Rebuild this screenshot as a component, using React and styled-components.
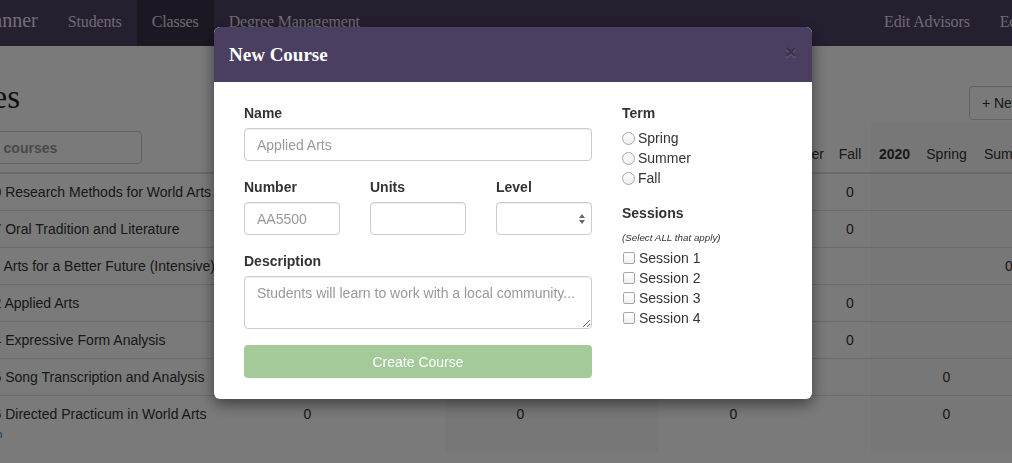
import React from 'react'
import styled, { createGlobalStyle } from 'styled-components'

const GlobalStyle = createGlobalStyle`
  * { box-sizing: border-box; }
  html, body {
    margin: 0;
    padding: 0;
    overflow: hidden;
    background: #fff;
  }
  body {
    font-family: "Liberation Sans", Arial, sans-serif;
    font-size: 14px;
    line-height: 20px;
    color: #333;
  }
`

const Page = styled.div`
  width: 1012px;
  height: 463px;
  overflow: hidden;
`

/* ---------- navbar ---------- */

const NavBar = styled.nav`
  display: flex;
  width: 1212px;
  height: 46px;
  margin-left: -100px;
  background: #4f4165;
  font-family: "Liberation Serif", Georgia, serif;
`

const Brand = styled.div`
  padding: 10px 15px 16px;
  font-size: 20px;
  line-height: 20px;
  color: #ece8f0;
`

const NavItem = styled.div`
  padding: 12px 15px 14px;
  font-size: 16px;
  line-height: 20px;
  letter-spacing: -0.15px;
  color: #e4dfea;
  white-space: nowrap;
  background: ${props => props.$active ? '#3c3249' : 'transparent'};
`

const NavRight = styled.div`
  display: flex;
  margin-left: auto;
  padding-right: 16px;
`

/* ---------- page body ---------- */

const Main = styled.main`
  width: 1163px;
  margin-left: -79px;
`

const TitleRow = styled.div`
  display: flex;
  justify-content: space-between;
  align-items: baseline;
  margin-top: 35px;
`

const Title = styled.h2`
  margin: 0;
  font-family: "Liberation Serif", Georgia, serif;
  font-size: 33px;
  line-height: 33px;
  font-weight: normal;
  color: #222;
`

const NewButton = styled.button`
  padding: 6px 12px;
  border: 1px solid #ccc;
  border-radius: 4px;
  background: #fff;
  font-family: inherit;
  font-size: 14px;
  line-height: 20px;
  color: #333;
`

const TableWrap = styled.div`
  margin-top: 3px;
  padding-left: 16px;
`

const Table = styled.table`
  width: 1147px;
  table-layout: fixed;
  border-collapse: collapse;
`

const HeadCell = styled.th`
  padding: 8px;
  vertical-align: bottom;
  border-bottom: 2px solid #ddd;
  text-align: ${props => props.$left ? 'left' : 'center'};
  font-weight: ${props => props.$bold ? 'bold' : 'normal'};
  white-space: nowrap;
  overflow: hidden;
  background: ${props => props.$shade ? '#f9f9f9' : 'transparent'};
`

const Cell = styled.td`
  padding: 8px;
  vertical-align: top;
  border-top: 1px solid #ddd;
  text-align: ${props => props.$left ? 'left' : 'center'};
  white-space: nowrap;
  overflow: hidden;
  background: ${props => props.$shade ? '#f9f9f9' : 'transparent'};
`

const SearchInput = styled.input`
  display: block;
  width: 202px;
  height: 33px;
  margin-left: -5px;
  padding: 6px 12px;
  border: 1px solid #ccc;
  border-radius: 4px;
  font-family: inherit;
  font-size: 14px;
  &::placeholder { color: #999; font-weight: bold; }
`

const CourseLink = styled.div`
  font-size: 11px;
  color: #337ab7;
`

/* ---------- modal ---------- */

const Backdrop = styled.div`
  position: fixed;
  inset: 0;
  background: rgba(0, 0, 0, 0.52);
`

const Dialog = styled.div`
  position: fixed;
  top: 27px;
  left: 214px;
  width: 598px;
  border-radius: 6px;
  overflow: hidden;
  background: #fff;
  box-shadow: 0 5px 15px rgba(0, 0, 0, 0.5);
`

const ModalHeader = styled.div`
  display: flex;
  align-items: center;
  justify-content: space-between;
  height: 55px;
  padding: 0 15px;
  background: #4a3f60;
`

const ModalTitle = styled.h4`
  margin: 0;
  font-family: "Liberation Serif", Georgia, serif;
  font-size: 19px;
  line-height: 25px;
  font-weight: bold;
  color: #fff;
`

const Close = styled.span`
  margin-top: -6px;
  font-size: 21px;
  line-height: 1;
  font-weight: bold;
  color: #000;
  opacity: 0.2;
  text-shadow: 0 1px 0 #fff;
`

const ModalBody = styled.div`
  display: grid;
  grid-template-columns: 348px 1fr;
  column-gap: 30px;
  padding: 21px 30px;
`

const Field = styled.div`
  margin-bottom: 16px;
`

const Label = styled.label`
  display: block;
  margin-bottom: 5px;
  font-weight: bold;
  color: #333;
`

const inputBase = `
  display: block;
  width: 100%;
  padding: 6px 12px;
  border: 1px solid #ccc;
  border-radius: 4px;
  background: #fff;
  font-family: "Liberation Sans", Arial, sans-serif;
  font-size: 14px;
  color: #555;
  box-shadow: inset 0 1px 1px rgba(0, 0, 0, 0.075);
  &::placeholder { color: #999; }
`

const TextInput = styled.input`
  ${inputBase}
  height: 33px;
`

const TextArea = styled.textarea`
  ${inputBase}
  height: 53px;
  line-height: 20px;
`

const ThreeCols = styled.div`
  display: grid;
  grid-template-columns: repeat(3, 96px);
  column-gap: 30px;
  margin-bottom: 16px;
`

const SelectWrap = styled.div`
  position: relative;
`

const Select = styled.select`
  ${inputBase}
  height: 33px;
  appearance: none;
`

const SelectArrows = styled.svg`
  position: absolute;
  right: 7px;
  top: 12px;
  pointer-events: none;
`

const SubmitButton = styled.button`
  display: block;
  width: 100%;
  height: 33px;
  border: none;
  border-radius: 4px;
  background: #a3ca98;
  font-family: inherit;
  font-size: 14px;
  color: #fff;
`

const Group = styled.div`
  margin-bottom: ${props => props.$gap || 0}px;
`

const Option = styled.label`
  display: flex;
  align-items: center;
  height: 20px;
  color: #333;
`

const Radio = styled.input`
  appearance: none;
  width: 13px;
  height: 13px;
  margin: 0 3px 0 0;
  border: 1px solid #a6a6a6;
  border-radius: 50%;
  background: linear-gradient(#fff, #ededed);
`

const Check = styled.input`
  appearance: none;
  width: 12px;
  height: 12px;
  margin: 0 4px 0 1px;
  border: 1px solid #a6a6a6;
  border-radius: 2px;
  background: linear-gradient(#fff, #f0f0f0);
`

const Hint = styled.div`
  font-size: 9.8px;
  font-style: italic;
  color: #333;
`

/* ---------- data ---------- */

const years = [2017, 2018, 2019, 2020]
const seasons = ['Spring', 'Summer', 'Fall']
const widths = [46, 59, 66, 42]

const courses = [
  { code: 'WA 5300', name: 'Research Methods for World Arts', offered: ['2017-Fall', '2018-Fall', '2019-Fall'] },
  { code: 'WA 5307', name: 'Oral Tradition and Literature', offered: ['2018-Fall', '2019-Fall'] },
  { code: 'WA 5311', name: 'Arts for a Better Future (Intensive)', offered: ['2018-Summer', '2020-Summer'] },
  { code: 'WA 5312', name: 'Applied Arts', offered: ['2017-Fall', '2019-Fall'] },
  { code: 'WA 5314', name: 'Expressive Form Analysis', offered: ['2018-Fall', '2019-Fall'] },
  { code: 'WA 5315', name: 'Song Transcription and Analysis', offered: ['2018-Spring', '2020-Spring'] },
  { code: 'WA 5316', name: 'Directed Practicum in World Arts', offered: ['2017-Spring', '2018-Spring', '2019-Spring', '2020-Spring'], link: 'Add section' },
]

const shaded = i => i % 2 === 1

const ArrowsIcon = () => (
  <SelectArrows width="6" height="10" viewBox="0 0 6 10">
    <path d="M3 0 L6 4 L0 4 Z" fill="#666" />
    <path d="M0 6 L6 6 L3 10 Z" fill="#666" />
  </SelectArrows>
)

const CoursesTable = () => (
  <Table>
    <colgroup>
      <col style={{ width: 295 }} />
      {years.map(y => widths.map((w, i) => <col key={`${y}-${i}`} style={{ width: w }} />))}
    </colgroup>
    <thead>
      <tr>
        <HeadCell $left>
          <SearchInput placeholder="Search courses" />
        </HeadCell>
        {years.map((y, yi) => (
          <React.Fragment key={y}>
            <HeadCell $bold $shade={shaded(yi)}>{y}</HeadCell>
            {seasons.map(s => <HeadCell key={s} $shade={shaded(yi)}>{s}</HeadCell>)}
          </React.Fragment>
        ))}
      </tr>
    </thead>
    <tbody>
      {courses.map(course => (
        <tr key={course.code}>
          <Cell $left>
            {course.code} {course.name}
            {course.link && <CourseLink>{course.link}</CourseLink>}
          </Cell>
          {years.map((y, yi) => (
            <React.Fragment key={y}>
              <Cell $shade={shaded(yi)} />
              {seasons.map(s => (
                <Cell key={s} $shade={shaded(yi)}>
                  {course.offered.includes(`${y}-${s}`) ? 0 : ''}
                </Cell>
              ))}
            </React.Fragment>
          ))}
        </tr>
      ))}
    </tbody>
  </Table>
)

const NewCourseModal = () => (
  <Dialog>
    <ModalHeader>
      <ModalTitle>New Course</ModalTitle>
      <Close>×</Close>
    </ModalHeader>
    <ModalBody>
      <div>
        <Field>
          <Label>Name</Label>
          <TextInput placeholder="Applied Arts" />
        </Field>
        <ThreeCols>
          <div>
            <Label>Number</Label>
            <TextInput placeholder="AA5500" />
          </div>
          <div>
            <Label>Units</Label>
            <TextInput />
          </div>
          <div>
            <Label>Level</Label>
            <SelectWrap>
              <Select defaultValue="">
                <option value="" />
                <option value="grad">Graduate</option>
                <option value="ugrad">Undergraduate</option>
              </Select>
              <ArrowsIcon />
            </SelectWrap>
          </div>
        </ThreeCols>
        <Field>
          <Label>Description</Label>
          <TextArea placeholder="Students will learn to work with a local community..." />
        </Field>
        <SubmitButton disabled>Create Course</SubmitButton>
      </div>
      <div>
        <Group $gap={15}>
          <Label>Term</Label>
          {seasons.map(s => (
            <Option key={s}>
              <Radio type="radio" name="term" />
              {s}
            </Option>
          ))}
        </Group>
        <Group>
          <Label>Sessions</Label>
          <Hint>(Select ALL that apply)</Hint>
          {[1, 2, 3, 4].map(n => (
            <Option key={n}>
              <Check type="checkbox" />
              Session {n}
            </Option>
          ))}
        </Group>
      </div>
    </ModalBody>
  </Dialog>
)

const App = () => (
  <Page>
    <GlobalStyle />
    <NavBar>
      <Brand>Course Planner</Brand>
      <NavItem>Students</NavItem>
      <NavItem $active>Classes</NavItem>
      <NavItem>Degree Management</NavItem>
      <NavRight>
        <NavItem>Edit Advisors</NavItem>
        <NavItem>Edit Degrees</NavItem>
      </NavRight>
    </NavBar>
    <Main>
      <TitleRow>
        <Title>Classes</Title>
        <NewButton>+ New Course</NewButton>
      </TitleRow>
      <TableWrap>
        <CoursesTable />
      </TableWrap>
    </Main>
    <Backdrop />
    <NewCourseModal />
  </Page>
)

export default App
